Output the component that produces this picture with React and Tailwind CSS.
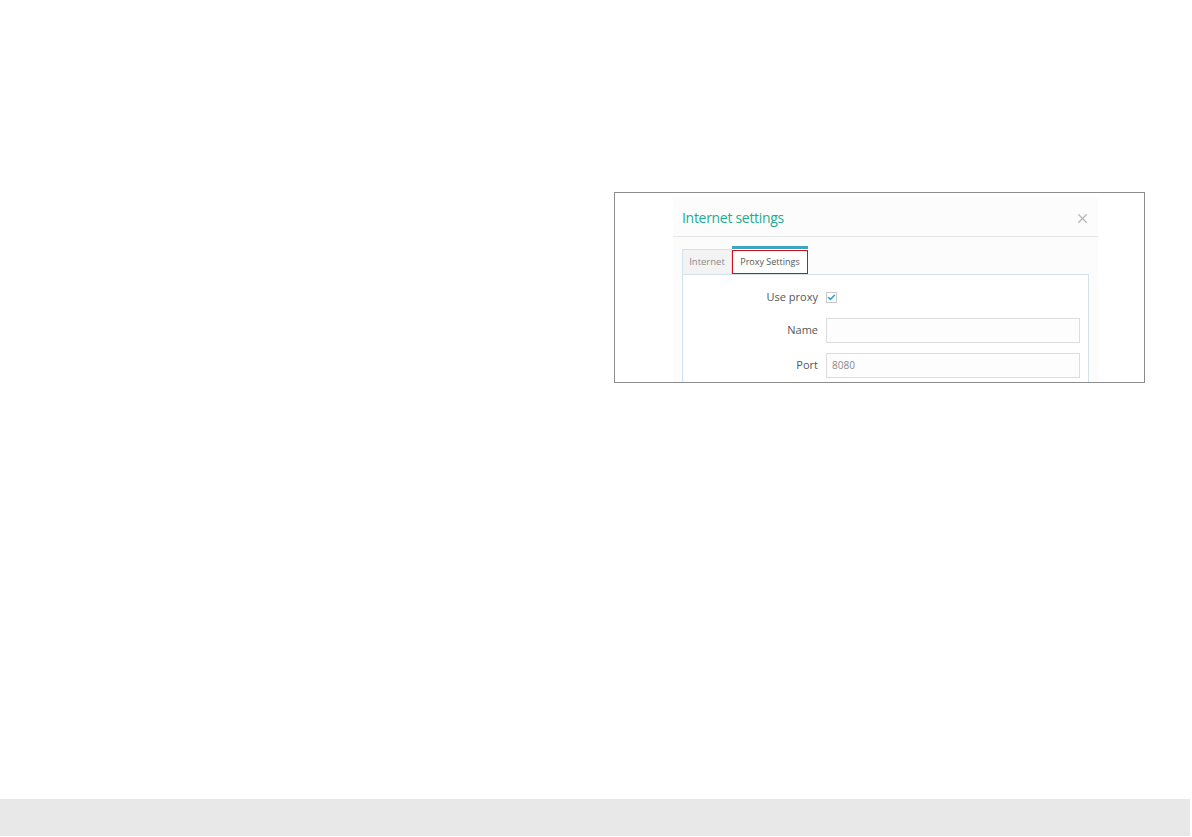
import { Check, X } from "lucide-react";

const FONT = { fontFamily: '"Open Sans", "Noto Sans", sans-serif' };

function Field({ label, children }) {
  return (
    <div className="flex items-center">
      <div className="w-[143px] pr-[8px] text-right text-[11px] text-[#555]">{label}</div>
      {children}
    </div>
  );
}

export default function App() {
  return (
    <div className="w-[1192px] h-[837px] bg-white flex flex-col" style={FONT}>
      <div className="flex-1 pt-[192px] pl-[614px]">
        {/* embedded screenshot frame */}
        <div className="w-[531px] h-[191px] border border-[#8c8c8c] overflow-hidden bg-white pl-[58px] pt-[5px]">
          <div className="w-[425px] h-[200px] bg-[#fcfcfc]">
            {/* header */}
            <div className="h-[39px] flex items-center justify-between pl-[9px] pr-[8px] border-b border-[#e6e6e6]">
              <span className="text-[14px] text-[#22ac8f] tracking-[-0.3px]">Internet settings</span>
              <X className="w-[15px] h-[15px] text-[#b5b5b5] mt-[2px]" strokeWidth={2} />
            </div>

            {/* tabs */}
            <div className="pl-[9px] pt-[8px] pr-[9px]">
              <div className="flex items-end h-[29px]">
                <div className="h-[25px] w-[50px] flex items-center justify-center text-[9.5px] text-[#8a8a8a] bg-[#f3f3f3] border border-b-0 border-[#d3e2e8]">
                  Internet
                </div>
                <div className="w-[76px] flex flex-col">
                  <div className="h-[3px] bg-[#3ca6c4]" />
                  <div className="h-[1px] bg-[#fcfcfc]" />
                  <div className="h-[24px] flex items-center justify-center text-[9px] text-[#555] bg-white border border-[#d10f1c]">
                    Proxy Settings
                  </div>
                </div>
              </div>

              {/* panel */}
              <div className="h-[140px] border border-[#d3e2e8] bg-white pt-[14px] flex flex-col">
                <Field label="Use proxy">
                  <div className="w-[11px] h-[11px] border border-[#c9c9c9] bg-white flex items-center justify-center">
                    <Check className="w-[9px] h-[9px] text-[#2b9fd9]" strokeWidth={4} />
                  </div>
                </Field>
                <div className="h-[12px]" />
                <Field label="Name">
                  <div className="w-[254px] h-[25px] border border-[#dcdcdc] bg-[#fdfdfd]" />
                </Field>
                <div className="h-[10px]" />
                <Field label="Port">
                  <div className="w-[254px] h-[25px] border border-[#dcdcdc] bg-[#fdfdfd] flex items-center pl-[5px] text-[10px] text-[#888]">
                    8080
                  </div>
                </Field>
              </div>
            </div>
          </div>
        </div>
      </div>
      <div className="h-[37px] w-[1190px] bg-[#e8e8e8] mb-[1px]" />
    </div>
  );
}
